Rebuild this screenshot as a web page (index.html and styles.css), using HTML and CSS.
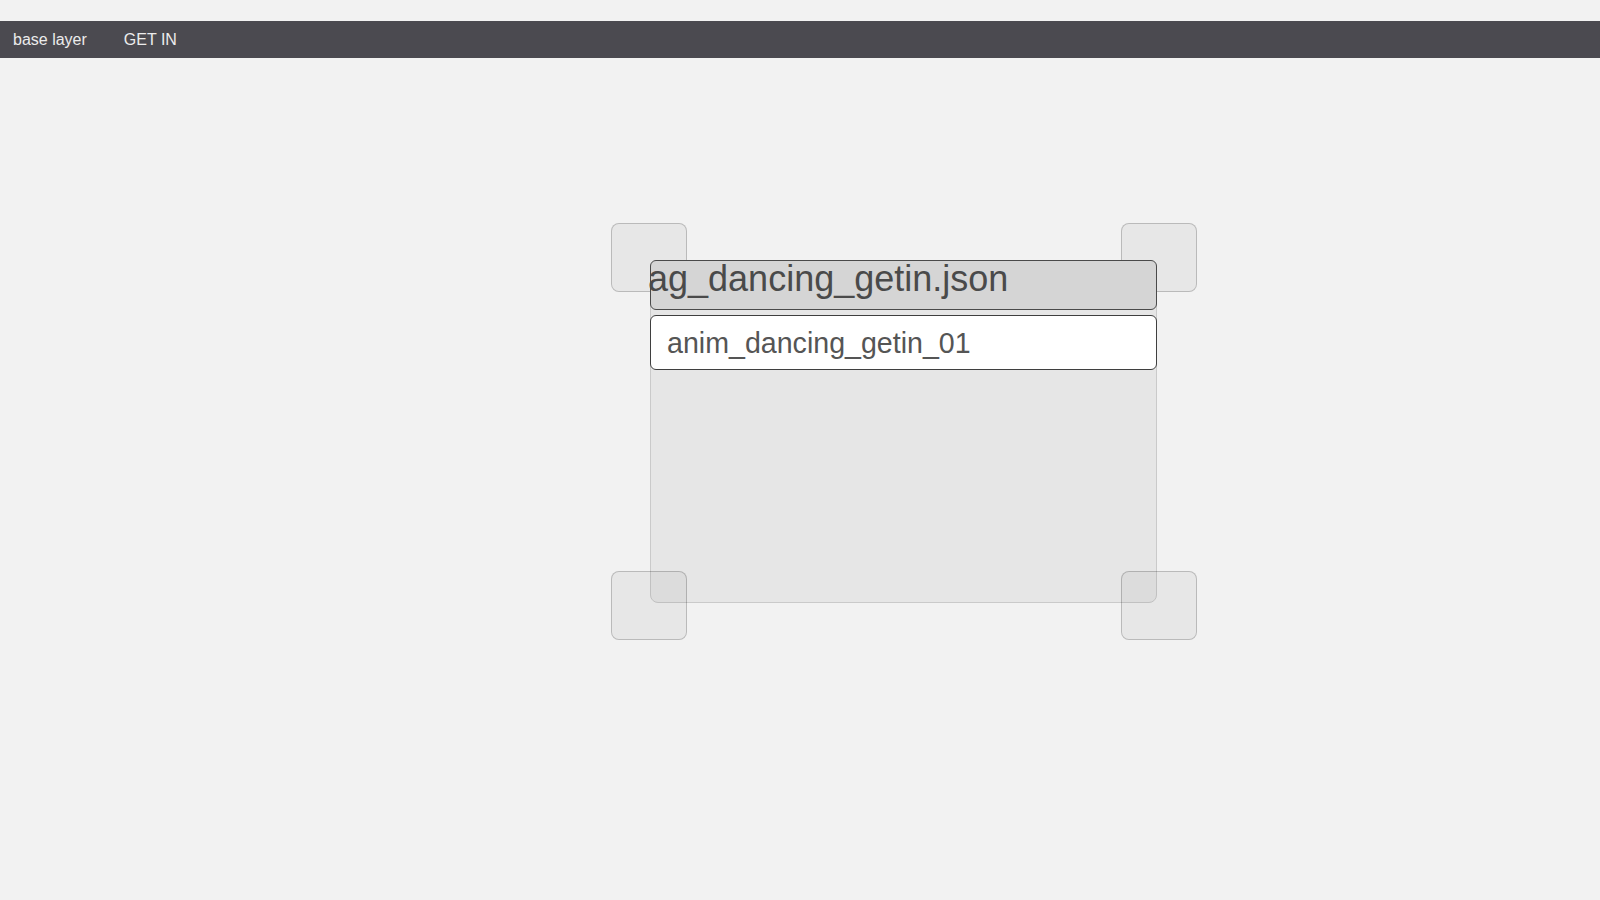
FILE: index.html
```html
<!DOCTYPE html>
<html>
<head>
<meta charset="utf-8">
<link rel="stylesheet" href="styles.css">
</head>
<body>
<div class="topbar">
  <span class="tab">base layer</span>
  <span class="tab">GET IN</span>
</div>
<div class="stage">
  <div class="frame">
    <div class="handle tl"></div>
    <div class="handle tr"></div>
    <div class="handle bl"></div>
    <div class="handle br"></div>
    <div class="panel">
      <div class="title">ag_dancing_getin.json</div>
      <div class="item">anim_dancing_getin_01</div>
    </div>
  </div>
</div>
</body>
</html>
```

FILE: styles.css
```css
html, body {
  margin: 0;
  padding: 0;
  background: #f2f2f2;
  font-family: "Liberation Sans", Arial, sans-serif;
}
body {
  padding-top: 21px;
  height: 879px;
  overflow: hidden;
}
.topbar {
  height: 37px;
  background: #4b4a50;
  display: flex;
  align-items: center;
  gap: 37px;
  padding-left: 13px;
  color: #ececec;
  font-size: 16px;
}
.stage {
  padding-top: 165px;
  padding-left: 611px;
}
.frame {
  position: relative;
  width: 586px;
  height: 417px;
  box-sizing: border-box;
  padding: 37px 40px 37px 39px;
}
.handle {
  position: absolute;
  width: 76px;
  height: 69px;
  box-sizing: border-box;
  border: 1px solid rgba(0, 0, 0, 0.2);
  background: rgba(0, 0, 0, 0.045);
  border-radius: 8px;
  z-index: 1;
}
.tl { left: 0; top: 0; }
.tr { right: 0; top: 0; }
.bl { left: 0; bottom: 0; }
.br { right: 0; bottom: 0; }
.panel {
  height: 343px;
  box-sizing: border-box;
  background: #e6e6e6;
  border: 1px solid #cacaca;
  border-radius: 8px;
  display: flex;
  flex-direction: column;
  gap: 5px;
}
.title {
  position: relative;
  z-index: 2;
  margin: -1px -1px 0 -1px;
  height: 50px;
  box-sizing: border-box;
  background: #d5d5d5;
  border: 1.5px solid #4a4a4a;
  border-radius: 6px;
  font-size: 36px;
  line-height: 35px;
  color: #4a4a4a;
  padding-left: 0;
  text-indent: -3px;
  white-space: nowrap;
  overflow: visible;
}
.item {
  position: relative;
  z-index: 2;
  margin: 0 -1px;
  height: 55px;
  box-sizing: border-box;
  background: #ffffff;
  border: 1.5px solid #3f3f3f;
  border-radius: 6px;
  font-size: 28.6px;
  line-height: 54px;
  color: #555;
  padding-left: 16px;
  white-space: nowrap;
}
```
